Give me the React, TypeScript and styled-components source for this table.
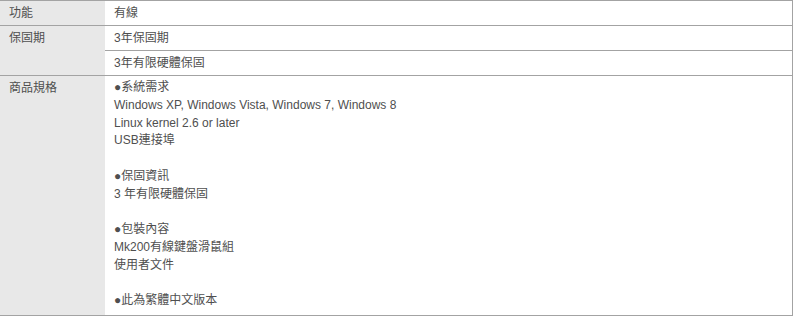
import { FC } from "react";
import styled, { createGlobalStyle } from "styled-components";

const GlobalStyle = createGlobalStyle`
    body {
        margin: 0;
        background: #fff;
        font-family: "Liberation Sans", "Noto Sans CJK TC", sans-serif;
    }
`

const SpecTable = styled.table`
    width: 793px;
    border-collapse: collapse;
    border-top: 1px solid #a3a3a3;
    border-right: 1px solid #a3a3a3;
    border-bottom: 1px solid #a3a3a3;
    font-size: 12px;
    color: #4f4f4f;

    tr{
        border-bottom: 1px solid #a3a3a3;
    }
`
const Label = styled.th`
    width: 96px;
    background: #e8e8e8;
    font-weight: normal;
    text-align: left;
    vertical-align: top;
    padding: 3px 0 3px 9px;
    line-height: 18px;
`
const Value = styled.td<{ $tall?: boolean }>`
    text-align: left;
    vertical-align: top;
    padding: ${p => p.$tall ? "3px 9px 5px" : "3px 9px"};
    line-height: ${p => p.$tall ? "17.75px" : "18px"};
`
const Line = styled.div`
    min-height: 17.75px;
`

const specLines = [
    "●系統需求",
    "Windows XP, Windows Vista, Windows 7, Windows 8",
    "Linux kernel 2.6 or later",
    "USB連接埠",
    "",
    "●保固資訊",
    "3 年有限硬體保固",
    "",
    "●包裝內容",
    "Mk200有線鍵盤滑鼠組",
    "使用者文件",
    "",
    "●此為繁體中文版本",
]

const App: FC = () => {
    return (
        <>
            <GlobalStyle />
            <SpecTable>
                <tbody>
                    <tr>
                        <Label>功能</Label>
                        <Value>有線</Value>
                    </tr>
                    <tr>
                        <Label rowSpan={2}>保固期</Label>
                        <Value>3年保固期</Value>
                    </tr>
                    <tr>
                        <Value>3年有限硬體保固</Value>
                    </tr>
                    <tr>
                        <Label>商品規格</Label>
                        <Value $tall>
                            {specLines.map((text, i) => (
                                <Line key={i}>{text}</Line>
                            ))}
                        </Value>
                    </tr>
                </tbody>
            </SpecTable>
        </>
    )
}

export default App;
